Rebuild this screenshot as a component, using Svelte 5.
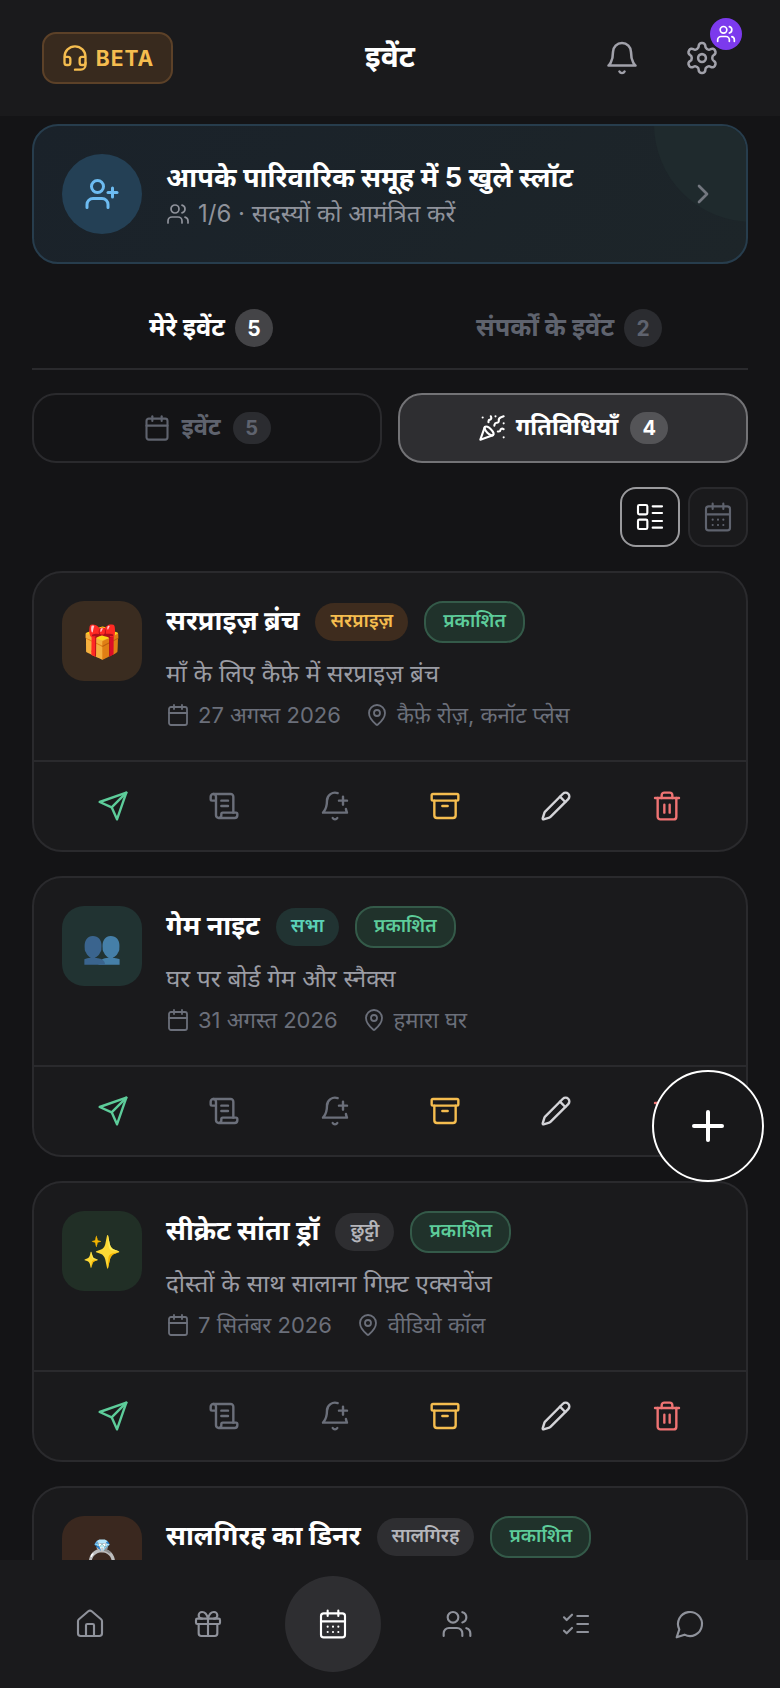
<script>
  const mainTabs = [
    { label: 'मेरे इवेंट', count: 5, active: true },
    { label: 'संपर्कों के इवेंट', count: 2, active: false }
  ];
  const cards = [
    { emoji: '🎁', tone: 'amber', title: 'सरप्राइ\u095B ब्रंच', tag: 'सरप्राइ\u095B', tagTone: 'tag-amber', desc: 'माँ के लिए कैफ़े में सरप्राइ\u095B ब्रंच', date: '27 अगस्त 2026', place: 'कैफ़े रोज़, कनॉट प्लेस' },
    { emoji: '👥', tone: 'teal', title: 'गेम नाइट', tag: 'सभा', tagTone: 'tag-teal', desc: 'घर पर बोर्ड गेम और स्नैक्स', date: '31 अगस्त 2026', place: 'हमारा घर' },
    { emoji: '✨', tone: 'green', title: 'सीक्रेट सांता ड्रॉ', tag: 'छुट्टी', tagTone: 'tag-grey', desc: 'दोस्तों के साथ सालाना गिफ़्ट एक्सचेंज', date: '7 सितंबर 2026', place: 'वीडियो कॉल' },
    { emoji: '💍', tone: 'brown', title: 'सालगिरह का डिनर', tag: 'सालगिरह', tagTone: 'tag-grey', desc: 'पसंदीदा रेस्तराँ में डिनर', date: '12 सितंबर 2026', place: 'रेस्तराँ' }
  ];
</script>

<div class="page">
  <header class="top">
    <button class="beta">
      <svg width="28" height="28" viewBox="0 0 24 24" fill="none" stroke="#f5bd4f" stroke-width="2" stroke-linecap="round" stroke-linejoin="round"><path d="M3 11h3a2 2 0 0 1 2 2v3a2 2 0 0 1-2 2H5a2 2 0 0 1-2-2v-5Zm0 0a9 9 0 1 1 18 0m0 0v5a2 2 0 0 1-2 2h-1a2 2 0 0 1-2-2v-3a2 2 0 0 1 2-2h3Z"/><path d="M21 16v2a4 4 0 0 1-4 4h-5"/></svg>
      <span>BETA</span>
    </button>
    <h1>इवेंट</h1>
    <div class="top-icons">
      <svg class="ic" width="36" height="36" viewBox="0 0 24 24" fill="none" stroke="#a1a1aa" stroke-width="1.7" stroke-linecap="round" stroke-linejoin="round"><path d="M6 8a6 6 0 0 1 12 0c0 7 3 9 3 9H3s3-2 3-9"/><path d="M10.3 21a1.94 1.94 0 0 0 3.4 0"/></svg>
      <div class="gear">
        <svg class="ic" width="36" height="36" viewBox="0 0 24 24" fill="none" stroke="#a1a1aa" stroke-width="1.7" stroke-linecap="round" stroke-linejoin="round"><path d="M12.22 2h-.44a2 2 0 0 0-2 2v.18a2 2 0 0 1-1 1.73l-.43.25a2 2 0 0 1-2 0l-.15-.08a2 2 0 0 0-2.73.73l-.22.38a2 2 0 0 0 .73 2.73l.15.1a2 2 0 0 1 1 1.72v.51a2 2 0 0 1-1 1.74l-.15.09a2 2 0 0 0-.73 2.73l.22.38a2 2 0 0 0 2.73.73l.15-.08a2 2 0 0 1 2 0l.43.25a2 2 0 0 1 1 1.73V20a2 2 0 0 0 2 2h.44a2 2 0 0 0 2-2v-.18a2 2 0 0 1 1-1.73l.43-.25a2 2 0 0 1 2 0l.15.08a2 2 0 0 0 2.73-.73l.22-.39a2 2 0 0 0-.73-2.73l-.15-.08a2 2 0 0 1-1-1.74v-.5a2 2 0 0 1 1-1.74l.15-.09a2 2 0 0 0 .73-2.73l-.22-.38a2 2 0 0 0-2.73-.73l-.15.08a2 2 0 0 1-2 0l-.43-.25a2 2 0 0 1-1-1.73V4a2 2 0 0 0-2-2z"/><circle cx="12" cy="12" r="2.6"/></svg>
        <span class="gear-badge">
          <svg width="20" height="20" viewBox="0 0 24 24" fill="none" stroke="#fff" stroke-width="2" stroke-linecap="round" stroke-linejoin="round"><path d="M16 21v-2a4 4 0 0 0-4-4H6a4 4 0 0 0-4 4v2"/><circle cx="9" cy="7" r="4"/><path d="M22 21v-2a4 4 0 0 0-3-3.87"/><path d="M16 3.13a4 4 0 0 1 0 7.75"/></svg>
        </span>
      </div>
    </div>
  </header>

  <main class="content">
    <section class="banner">
      <span class="blob"></span>
      <span class="banner-avatar">
        <svg width="36" height="36" viewBox="0 0 24 24" fill="none" stroke="#6dbcf2" stroke-width="2" stroke-linecap="round" stroke-linejoin="round"><path d="M16 21v-2a4 4 0 0 0-4-4H6a4 4 0 0 0-4 4v2"/><circle cx="9" cy="7" r="4"/><path d="M19 8v6"/><path d="M22 11h-6"/></svg>
      </span>
      <div class="banner-text">
        <strong>आपके पारिवारिक समूह में 5 खुले स्लॉट</strong>
        <span class="banner-sub">
          <svg width="24" height="24" viewBox="0 0 24 24" fill="none" stroke="#8f929b" stroke-width="1.7" stroke-linecap="round" stroke-linejoin="round"><path d="M16 21v-2a4 4 0 0 0-4-4H6a4 4 0 0 0-4 4v2"/><circle cx="9" cy="7" r="4"/><path d="M22 21v-2a4 4 0 0 0-3-3.87"/><path d="M16 3.13a4 4 0 0 1 0 7.75"/></svg>
          1/6 · सदस्यों को आमंत्रित करें
        </span>
      </div>
      <svg class="chev" width="32" height="32" viewBox="0 0 24 24" fill="none" stroke="#73777f" stroke-width="2" stroke-linecap="round" stroke-linejoin="round"><path d="m9 18 6-6-6-6"/></svg>
    </section>

    <nav class="tabs">
      {#each mainTabs as t}
        <button class="tab" class:on={t.active}>{t.label}<span class="count">{t.count}</span></button>
      {/each}
    </nav>

    <div class="subtabs">
      <button class="sub">
        <svg width="28" height="28" viewBox="0 0 24 24" fill="none" stroke="currentColor" stroke-width="1.8" stroke-linecap="round" stroke-linejoin="round"><path d="M8 2v4"/><path d="M16 2v4"/><rect width="18" height="18" x="3" y="4" rx="2"/><path d="M3 10h18"/></svg>
        इवेंट<span class="count">5</span>
      </button>
      <button class="sub on">
        <svg width="28" height="28" viewBox="0 0 24 24" fill="none" stroke="currentColor" stroke-width="1.8" stroke-linecap="round" stroke-linejoin="round"><path d="M5.8 11.3 2 22l10.7-3.79"/><path d="M4 3h.01"/><path d="M22 8h.01"/><path d="M15 2h.01"/><path d="M22 20h.01"/><path d="m22 2-2.24.75a2.9 2.9 0 0 0-1.96 3.12c.1.86-.57 1.63-1.45 1.63h-.38c-.86 0-1.6.6-1.76 1.44L14 10"/><path d="m22 13-.82-.33c-.86-.34-1.82.2-1.98 1.11c-.11.7-.72 1.22-1.43 1.22H17"/><path d="m11 2 .33.82c.34.86-.2 1.82-1.11 1.98C9.52 4.9 9 5.52 9 6.23V7"/><path d="M11 13c1.93 1.93 2.83 4.17 2 5-.83.83-3.07-.07-5-2-1.93-1.93-2.83-4.17-2-5 .83-.83 3.07.07 5 2Z"/></svg>
        गतिविधियाँ<span class="count">4</span>
      </button>
    </div>

    <div class="view">
      <button class="view-btn on" aria-label="list">
        <svg width="32" height="32" viewBox="0 0 24 24" fill="none" stroke="currentColor" stroke-width="1.6" stroke-linecap="round" stroke-linejoin="round"><rect x="3" y="3" width="7" height="7" rx="1"/><rect x="3" y="14" width="7" height="7" rx="1"/><path d="M14 4h7"/><path d="M14 9h7"/><path d="M14 15h7"/><path d="M14 20h7"/></svg>
      </button>
      <button class="view-btn" aria-label="calendar">
        <svg width="32" height="32" viewBox="0 0 24 24" fill="none" stroke="currentColor" stroke-width="1.6" stroke-linecap="round" stroke-linejoin="round"><path d="M8 2v4"/><path d="M16 2v4"/><rect width="18" height="18" x="3" y="4" rx="2"/><path d="M3 10h18"/><path d="M8 14h.01"/><path d="M12 14h.01"/><path d="M16 14h.01"/><path d="M8 18h.01"/><path d="M12 18h.01"/><path d="M16 18h.01"/></svg>
      </button>
    </div>

    {#each cards as c}
      <article class="card">
        <div class="card-body">
          <span class="emoji {c.tone}"><span class="glyph">{c.emoji}</span></span>
          <div class="info">
            <div class="title-row">
              <h2>{c.title}</h2>
              <span class="tag {c.tagTone}">{c.tag}</span>
              <span class="tag tag-pub">प्रकाशित</span>
            </div>
            <p class="desc">{c.desc}</p>
            <div class="meta">
              <span class="m">
                <svg width="24" height="24" viewBox="0 0 24 24" fill="none" stroke="currentColor" stroke-width="1.8" stroke-linecap="round" stroke-linejoin="round"><path d="M8 2v4"/><path d="M16 2v4"/><rect width="18" height="18" x="3" y="4" rx="2"/><path d="M3 10h18"/></svg>
                {c.date}
              </span>
              <span class="m">
                <svg width="24" height="24" viewBox="0 0 24 24" fill="none" stroke="currentColor" stroke-width="1.8" stroke-linecap="round" stroke-linejoin="round"><path d="M20 10c0 5-5.5 10.2-7.4 11.8a1 1 0 0 1-1.2 0C9.5 20.2 4 15 4 10a8 8 0 0 1 16 0"/><circle cx="12" cy="10" r="3"/></svg>
                {c.place}
              </span>
            </div>
          </div>
        </div>
        <div class="actions">
          <svg width="32" height="32" viewBox="0 0 24 24" fill="none" stroke="#5dcc9a" stroke-width="1.8" stroke-linecap="round" stroke-linejoin="round"><path d="m22 2-7 20-4-9-9-4Z"/><path d="M22 2 11 13"/></svg>
          <svg width="32" height="32" viewBox="0 0 24 24" fill="none" stroke="#6b6f7a" stroke-width="1.8" stroke-linecap="round" stroke-linejoin="round"><path d="M15 12h-5"/><path d="M15 8h-5"/><path d="M19 17V5a2 2 0 0 0-2-2H4"/><path d="M8 21h12a2 2 0 0 0 2-2v-1a1 1 0 0 0-1-1H11a1 1 0 0 0-1 1v1a2 2 0 1 1-4 0V5a2 2 0 1 0-4 0v2a1 1 0 0 0 1 1h3"/></svg>
          <svg width="32" height="32" viewBox="0 0 24 24" fill="none" stroke="#6b6f7a" stroke-width="1.8" stroke-linecap="round" stroke-linejoin="round"><path d="M10.27 21a2 2 0 0 0 3.46 0"/><path d="M15 8h6"/><path d="M18 5v6"/><path d="M20.2 14.2a14 14 0 0 0 .8 2.8H3c1-1.5 3-3 3-9a6 6 0 0 1 8-5.66"/></svg>
          <svg width="32" height="32" viewBox="0 0 24 24" fill="none" stroke="#f5bd4f" stroke-width="1.8" stroke-linecap="round" stroke-linejoin="round"><rect width="20" height="5" x="2" y="3" rx="1"/><path d="M4 8v11a2 2 0 0 0 2 2h12a2 2 0 0 0 2-2V8"/><path d="M10 12h4"/></svg>
          <svg width="32" height="32" viewBox="0 0 24 24" fill="none" stroke="#d4d4d8" stroke-width="1.8" stroke-linecap="round" stroke-linejoin="round"><path d="M21.17 6.81a1 1 0 0 0-3.99-3.99L3.84 16.17a2 2 0 0 0-.5.83l-1.32 4.35a.5.5 0 0 0 .62.62l4.35-1.32a2 2 0 0 0 .83-.5z"/><path d="m15 5 4 4"/></svg>
          <svg width="32" height="32" viewBox="0 0 24 24" fill="none" stroke="#ee7373" stroke-width="1.8" stroke-linecap="round" stroke-linejoin="round"><path d="M3 6h18"/><path d="M19 6v14a2 2 0 0 1-2 2H7a2 2 0 0 1-2-2V6"/><path d="M8 6V4a2 2 0 0 1 2-2h4a2 2 0 0 1 2 2v2"/><path d="M10 11v6"/><path d="M14 11v6"/></svg>
        </div>
      </article>
    {/each}
  </main>

  <button class="fab" aria-label="add">
    <svg width="48" height="48" viewBox="0 0 24 24" fill="none" stroke="#fff" stroke-width="2" stroke-linecap="round"><path d="M5 12h14"/><path d="M12 5v14"/></svg>
  </button>

  <nav class="bottom">
    <svg width="32" height="32" viewBox="0 0 24 24" fill="none" stroke="#8f929b" stroke-width="1.6" stroke-linecap="round" stroke-linejoin="round"><path d="M15 21v-8a1 1 0 0 0-1-1h-4a1 1 0 0 0-1 1v8"/><path d="M3 10a2 2 0 0 1 .71-1.53l7-6a2 2 0 0 1 2.58 0l7 6A2 2 0 0 1 21 10v9a2 2 0 0 1-2 2H5a2 2 0 0 1-2-2z"/></svg>
    <svg width="32" height="32" viewBox="0 0 24 24" fill="none" stroke="#8f929b" stroke-width="1.6" stroke-linecap="round" stroke-linejoin="round"><rect x="3" y="8" width="18" height="4" rx="1"/><path d="M12 8v13"/><path d="M19 12v7a2 2 0 0 1-2 2H7a2 2 0 0 1-2-2v-7"/><path d="M7.5 8a2.5 2.5 0 0 1 0-5A4.8 8 0 0 1 12 8a4.8 8 0 0 1 4.5-5 2.5 2.5 0 0 1 0 5"/></svg>
    <span class="nav-on">
      <svg width="32" height="32" viewBox="0 0 24 24" fill="none" stroke="#fff" stroke-width="1.6" stroke-linecap="round" stroke-linejoin="round"><path d="M8 2v4"/><path d="M16 2v4"/><rect width="18" height="18" x="3" y="4" rx="2"/><path d="M3 10h18"/><path d="M8 14h.01"/><path d="M12 14h.01"/><path d="M16 14h.01"/><path d="M8 18h.01"/><path d="M12 18h.01"/><path d="M16 18h.01"/></svg>
    </span>
    <svg width="32" height="32" viewBox="0 0 24 24" fill="none" stroke="#8f929b" stroke-width="1.6" stroke-linecap="round" stroke-linejoin="round"><path d="M16 21v-2a4 4 0 0 0-4-4H6a4 4 0 0 0-4 4v2"/><circle cx="9" cy="7" r="4"/><path d="M22 21v-2a4 4 0 0 0-3-3.87"/><path d="M16 3.13a4 4 0 0 1 0 7.75"/></svg>
    <svg width="32" height="32" viewBox="0 0 24 24" fill="none" stroke="#8f929b" stroke-width="1.6" stroke-linecap="round" stroke-linejoin="round"><path d="m3 17 2 2 4-4"/><path d="m3 7 2 2 4-4"/><path d="M13 6h8"/><path d="M13 12h8"/><path d="M13 18h8"/></svg>
    <svg width="32" height="32" viewBox="0 0 24 24" fill="none" stroke="#8f929b" stroke-width="1.6" stroke-linecap="round" stroke-linejoin="round"><path d="M7.9 20A9 9 0 1 0 4 16.1L2 22Z"/></svg>
  </nav>
</div>

<style>
  :global(body) { margin: 0; background: #141416; }
  .page {
    width: 780px; height: 1688px; overflow: hidden; position: relative;
    background: #141416; color: #fff;
    font-family: Inter, "Noto Sans Devanagari", "Noto Sans", sans-serif;
    display: flex; flex-direction: column;
  }
  button { font-family: inherit; cursor: pointer; }
  .top {
    height: 116px; flex: none; background: #1a1a1c;
    display: flex; align-items: center; justify-content: space-between;
    padding: 0 60px 0 42px; position: relative;
  }
  .beta {
    width: 131px; height: 52px; border-radius: 14px; box-sizing: border-box;
    background: #382a1e; border: 2px solid #5c4128; color: #f5bd4f;
    display: flex; align-items: center; justify-content: center; gap: 7px;
    font-size: 21px; font-weight: 700; letter-spacing: 1px; padding: 0;
  }
  h1 { position: absolute; left: 0; right: 0; text-align: center; margin: 0; font-size: 30px; font-weight: 700; pointer-events: none; }
  .top-icons { display: flex; align-items: center; gap: 44px; }
  .gear { position: relative; display: flex; }
  .ic { display: block; }
  .gear-badge {
    position: absolute; top: -22px; right: -22px; width: 32px; height: 32px; border-radius: 50%;
    background: #7c3aed; display: flex; align-items: center; justify-content: center;
  }
  .content { padding: 8px 32px 0; flex: 1; min-height: 0; display: flex; flex-direction: column; }
  .banner {
    height: 140px; flex: none; box-sizing: border-box; border: 2px solid #273d4d; border-radius: 26px;
    background: linear-gradient(135deg, #1a222a, #1d2529); position: relative; overflow: hidden;
    display: flex; align-items: center; padding: 0 27px 0 28px; gap: 24px;
  }
  .blob { position: absolute; right: -104px; top: -100px; width: 196px; height: 196px; border-radius: 50%; background: #1f2a2d; }
  .banner-avatar { width: 80px; height: 80px; border-radius: 50%; background: #244055; display: flex; align-items: center; justify-content: center; position: relative; flex: none; }
  .banner-text { display: flex; flex-direction: column; gap: 2px; flex: 1; position: relative; }
  .banner-text strong { font-size: 27.2px; font-weight: 700; line-height: 38px; }
  .banner-sub { font-size: 24px; color: #8f929b; display: flex; align-items: center; gap: 8px; line-height: 30px; }
  .chev { position: relative; }
  .tabs { display: flex; height: 106px; flex: none; border-bottom: 2px solid #2a2a2d; box-sizing: border-box; }
  .tab {
    flex: 1; background: none; border: 0; color: #5f636e; font-size: 25.4px; font-weight: 700;
    display: flex; align-items: center; justify-content: center; gap: 10px; padding: 0; margin-top: 24px;
  }
  .tab.on { color: #fff; }
  .count { min-width: 38px; height: 38px; border-radius: 19px; background: #2b2c30; color: #5f636e; display: inline-flex; align-items: center; justify-content: center; font-size: 21px; font-weight: 700; }
  .tab.on .count { background: #444447; color: #fff; }
  .subtabs { display: grid; grid-template-columns: 1fr 1fr; gap: 16px; margin-top: 23px; }
  .sub {
    height: 70px; border-radius: 24px; background: transparent; border: 2px solid #2a2a2d; box-sizing: border-box;
    color: #5f636e; font-size: 23.6px; font-weight: 700; display: flex; align-items: center; justify-content: center; gap: 10px; padding: 0;
  }
  .sub .count { height: 32px; min-width: 38px; font-size: 20px; margin-left: 2px; }
  .sub.on { background: #2e2e31; border-color: #737376; color: #fff; }
  .sub.on .count { background: #545457; color: #fff; }
  .view { display: flex; justify-content: flex-end; gap: 8px; margin-top: 24px; }
  .view-btn { width: 60px; height: 60px; border-radius: 16px; background: transparent; border: 2px solid #2a2a2d; box-sizing: border-box; color: #5f636e; padding: 0; display: flex; align-items: center; justify-content: center; }
  .view-btn.on { border-color: #9a9a9d; color: #fff; }
  .view-btn:last-child { background: #1a1a1c; }
  .card { flex: none; height: 281px; box-sizing: border-box; margin-top: 24px; border: 2px solid #2a2a2d; border-radius: 30px; background: #1a1a1c; display: flex; flex-direction: column; }
  .card-body { flex: 1; display: flex; padding: 28px 28px 0; gap: 24px; }
  .emoji { width: 80px; height: 80px; border-radius: 22px; display: flex; align-items: center; justify-content: center; font-size: 32px; flex: none; }
  .amber { background: #3a2c20; }
  .teal { background: #213332; }
  .teal .glyph { filter: saturate(.5) brightness(.9); }
  .green { background: #212f26; }
  .brown { background: #3a281f; }
  .info { min-width: 0; flex: 1; }
  .title-row { display: flex; align-items: center; gap: 16px; height: 42px; }
  h2 { margin: 0; font-size: 27px; font-weight: 700; white-space: nowrap; }
  .tag { height: 38px; padding: 0 15px; box-sizing: border-box; border-radius: 19px; display: flex; align-items: center; font-size: 19px; font-weight: 600; white-space: nowrap; }
  .tag-amber { background: #3e2c1e; color: #f5bd4f; }
  .tag-teal { background: #213332; color: #5bd0b8; }
  .tag-grey { background: #2e2e31; color: #b4b5ba; }
  .tag-pub { height: 42px; background: #20322b; color: #5dcc9a; border: 2px solid #345a49; padding: 0 17px; }
  .desc { margin: 13px 0 0; font-size: 24.2px; line-height: 36px; color: #9a9ca4; }
  .meta { display: flex; gap: 24px; margin-top: 5px; color: #6b6f7a; font-size: 22px; line-height: 36px; }
  .m { display: flex; align-items: center; gap: 8px; }
  .actions { height: 88px; flex: none; border-top: 2px solid #2a2a2d; display: flex; align-items: center; justify-content: space-between; padding: 0 63px; }
  .fab {
    position: absolute; left: 652px; top: 1070px; width: 112px; height: 112px; border-radius: 50%;
    background: #18181a; border: 2px solid #fff; display: flex; align-items: center; justify-content: center; padding: 0;
  }
  .bottom {
    position: absolute; left: 0; right: 0; bottom: 0; height: 128px; background: #1a1a1c; box-sizing: border-box;
    display: grid; grid-template-columns: 116px 119px 132px 116px 122px 106px; align-items: center; justify-items: center; padding-left: 32px;
  }
  .nav-on { width: 96px; height: 96px; border-radius: 50%; background: #2e2e31; display: flex; align-items: center; justify-content: center; }
</style>
